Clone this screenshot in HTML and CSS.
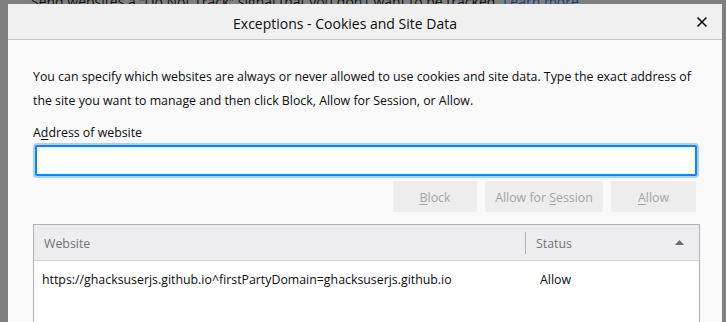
FILE: index.html
```html
<!DOCTYPE html>
<html lang="en">
<head>
    <meta charset="UTF-8">
    <title>Exceptions - Cookies and Site Data</title>
    <link rel="stylesheet" href="styles.css">
</head>
<body>
    <div class="backdrop-line">
        <span>Send websites a “Do Not Track” signal that you don’t want to be tracked</span>
        <a class="backdrop-link" href="#">Learn more</a>
    </div>

    <div class="dialog">
        <header class="dialog-titlebar">
            <h1 class="dialog-title">Exceptions - Cookies and Site Data</h1>
            <button class="dialog-close" aria-label="Close">
                <svg width="12" height="12" viewBox="0 0 12 12">
                    <path d="M1.5 1.5 L10.5 10.5 M10.5 1.5 L1.5 10.5" stroke="#0c0c0d" stroke-width="1.6" fill="none"/>
                </svg>
            </button>
        </header>

        <main class="dialog-body">
            <p class="intro">You can specify which websites are always or never allowed to use cookies and site data. Type the exact address of the site you want to manage and then click Block, Allow for Session, or Allow.</p>

            <label for="url" class="field-label">A<u>d</u>dress of website</label>
            <input type="text" id="url" class="url-input">

            <div class="button-row">
                <button class="btn btn-block" disabled><u>B</u>lock</button>
                <button class="btn btn-session" disabled>Allow for <u>S</u>ession</button>
                <button class="btn btn-allow" disabled><u>A</u>llow</button>
            </div>

            <div class="site-table">
                <div class="table-head">
                    <div class="col-site">Website</div>
                    <div class="col-status">Status
                        <svg class="sort-arrow" width="9" height="6" viewBox="0 0 9 6"><path d="M0 6 L4.5 1 L9 6 Z" fill="#6a6a6a"/></svg>
                    </div>
                </div>
                <div class="table-row">
                    <div class="col-site">https://ghacksuserjs.github.io^firstPartyDomain=ghacksuserjs.github.io</div>
                    <div class="col-status">Allow</div>
                </div>
            </div>
        </main>
    </div>
</body>
</html>
```

FILE: styles.css
```css
:root {
    --backdrop: #7f7f7f;
    --titlebar: #f0f0f0;
    --panel: #f9f9fa;
    --text: #0c0c0d;
    --muted: #737373;
    --focus: #0a84ff;
    --focus-ring: #a8d1ff;
    --button: #ededed;
    --button-text: #a4a4a4;
    --border: #b1b1b3;
    --head: #ededf0;
}

* {
    margin: 0;
    padding: 0;
    box-sizing: border-box;
}

html, body {
    height: 100%;
    overflow: hidden;
}

body {
    font-family: 'Open Sans', 'Noto Sans', sans-serif;
    color: var(--text);
    background-color: var(--backdrop);
}

.backdrop-line {
    height: 4px;
    overflow: hidden;
    padding-left: 31px;
    font-size: 14px;
    line-height: 4px;
    white-space: nowrap;
    color: #111;
}

.backdrop-line span,
.backdrop-line a {
    display: inline-block;
    height: 4px;
    line-height: 4px;
    vertical-align: top;
}

.backdrop-link {
    color: #1c3e72;
    text-decoration: none;
    margin-left: 4px;
}

.dialog {
    margin-left: 8px;
    width: 714px;
    height: 400px;
    background-color: var(--panel);
}

.dialog-titlebar {
    height: 36px;
    display: flex;
    align-items: center;
    background-color: var(--titlebar);
    border-bottom: 1px solid #c5c5c5;
    padding: 3px 40px 0 0;
    position: relative;
}

.dialog-title {
    flex: 1;
    text-align: center;
    font-size: 14px;
    font-weight: 400;
}

.dialog-close {
    position: absolute;
    right: 14px;
    top: 12px;
    width: 12px;
    height: 12px;
    border: none;
    background: none;
    display: flex;
}

.dialog-body {
    padding: 25px 23px 0 25px;
}

.intro {
    font-size: 12.35px;
    line-height: 24px;
    width: 662px;
}

.field-label {
    display: block;
    margin-top: 7px;
    font-size: 12.35px;
    line-height: 25px;
}

.field-label u,
.btn u {
    text-decoration-thickness: 1px;
    text-underline-offset: 2px;
}

.url-input {
    display: block;
    width: 662px;
    height: 31px;
    margin-left: 2px;
    border: 2px solid var(--focus);
    border-radius: 2px;
    box-shadow: 0 0 0 2px var(--focus-ring);
    background: #fff;
    outline: none;
}

.button-row {
    display: flex;
    justify-content: flex-end;
    gap: 8px;
    margin-top: 5px;
    padding-right: 3px;
}

.btn {
    height: 31px;
    border: none;
    border-radius: 2px;
    background-color: var(--button);
    color: var(--button-text);
    font-family: inherit;
    font-size: 12.35px;
    padding-top: 1px;
}

.btn-block { width: 84px; }
.btn-session { width: 118px; }
.btn-allow { width: 85px; }

.site-table {
    margin-top: 12px;
    width: 667px;
    height: 120px;
    border: 1px solid var(--border);
    background-color: #fff;
    font-size: 12.35px;
}

.table-head {
    height: 36px;
    display: flex;
    align-items: center;
    background-color: var(--head);
    border-bottom: 1px solid #d2d2d6;
    color: var(--muted);
    padding-top: 1px;
}

.table-head .col-site {
    width: 491px;
    padding-left: 10px;
}

.table-head .col-status {
    flex: 1;
    display: flex;
    align-items: center;
    justify-content: space-between;
    height: 22px;
    padding: 0 15px 0 10px;
    border-left: 1px solid var(--border);
}

.sort-arrow {
    margin-bottom: 2px;
}

.table-row {
    display: flex;
    height: 36px;
    align-items: center;
}

.table-row .col-site {
    width: 496px;
    padding-left: 8px;
}

.table-row .col-status {
    flex: 1;
    padding-left: 10px;
}
```
